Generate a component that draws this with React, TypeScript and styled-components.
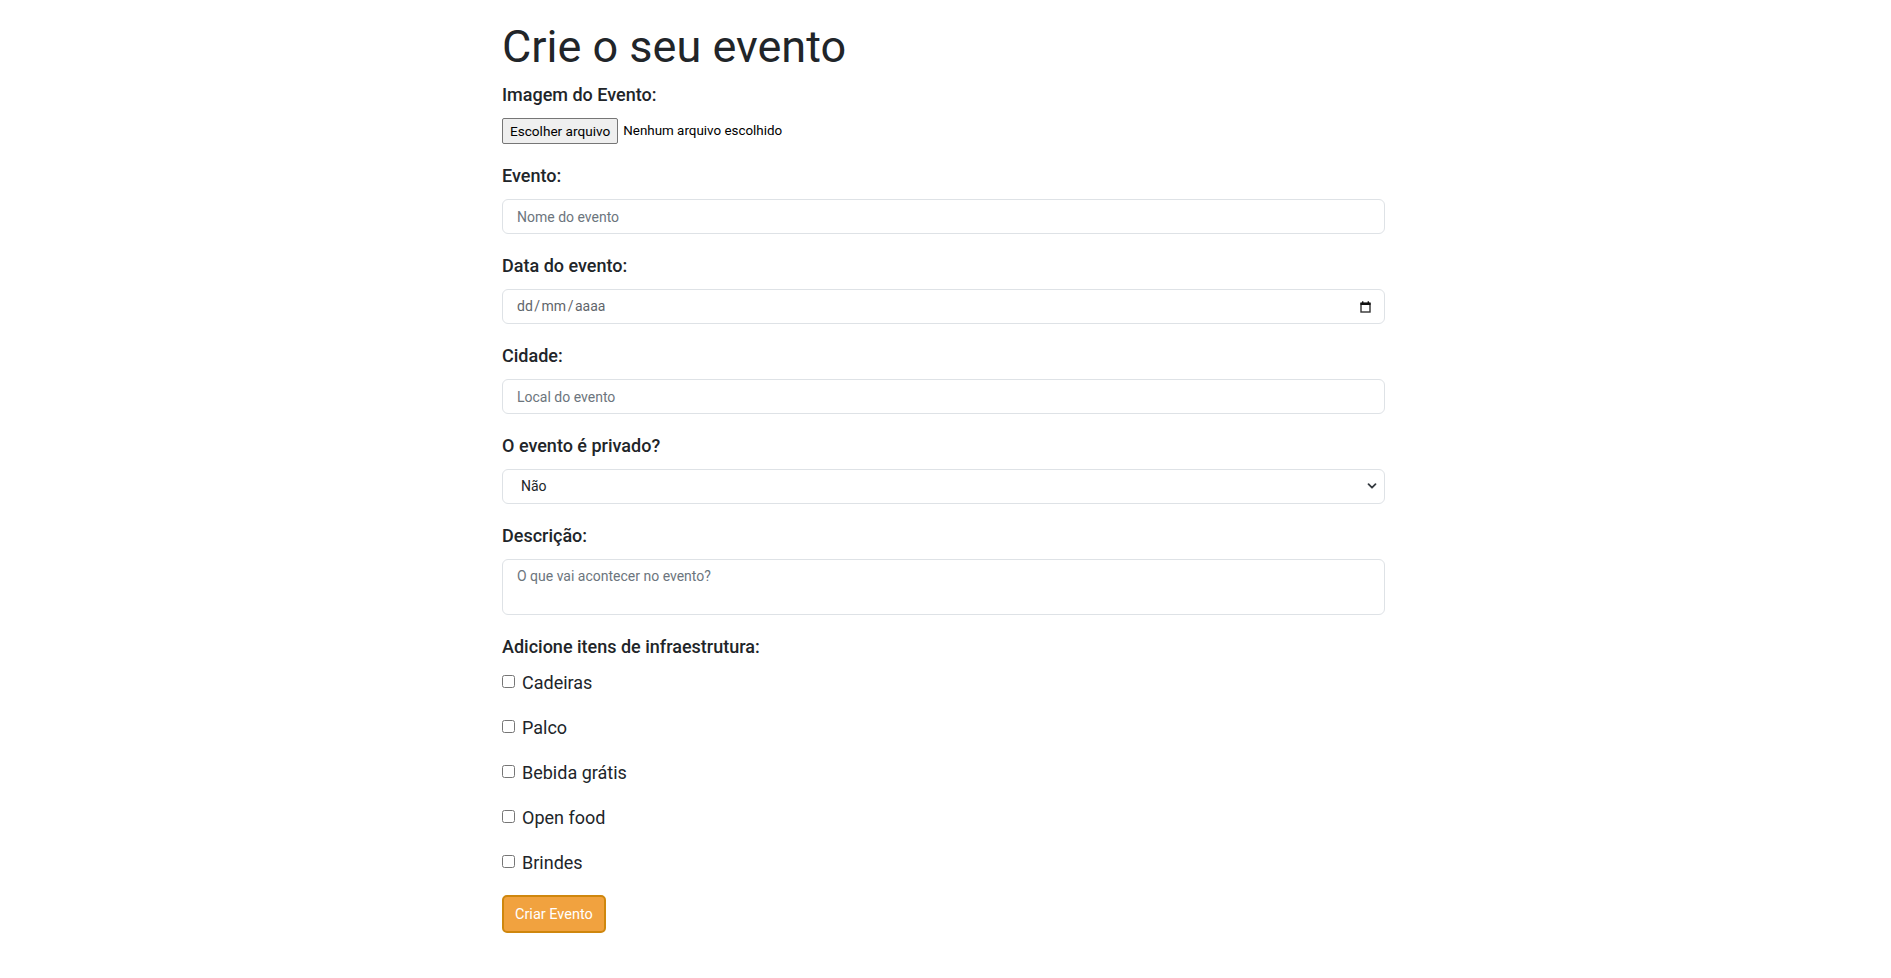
import React from "react";
import styled, { createGlobalStyle } from "styled-components";

const GlobalStyle = createGlobalStyle`
  html, body { margin: 0; padding: 0; background: #ffffff; }
  body {
    font-family: Roboto, "Noto Sans", "Liberation Sans", sans-serif;
    color: #212529;
    font-size: 16px;
    line-height: 1.5;
  }
  * { box-sizing: border-box; }
`;

const Page = styled.div`
  display: flex;
  justify-content: center;
  padding: 20px 4px 40px 0;
`;

const Form = styled.form`
  width: 883px;
  display: flex;
  flex-direction: column;
`;

const Title = styled.h1`
  margin: 0 0 8px;
  font-size: 45px;
  font-weight: 400;
  line-height: 53px;
  color: #212529;
`;

const Group = styled.div<{ $gap?: number }>`
  display: flex;
  flex-direction: column;
  margin-bottom: ${(p) => (p.$gap ?? 18)}px;
`;

const Label = styled.label<{ $mb?: number }>`
  display: block;
  font-size: 18px;
  font-weight: 500;
  line-height: 27px;
  margin-bottom: ${(p) => (p.$mb ?? 10)}px;
  color: #212529;
`;

const FileRow = styled.div`
  display: flex;
  align-items: center;
  gap: 5px;
  height: 26px;
`;

const FileButton = styled.button`
  height: 26px;
  padding: 0 7px;
  font-family: Roboto, "Liberation Sans", sans-serif;
  font-size: 13.6px;
  color: #000;
  background: #efefef;
  border: 1px solid #767676;
  border-radius: 2px;
`;

const FileText = styled.span`
  font-size: 13.4px;
  color: #000;
`;

const fieldBase = `
  width: 100%;
  height: 35px;
  padding: 6px 12px 6px 14px;
  font-family: Roboto, "Liberation Sans", sans-serif;
  font-size: 14px;
  line-height: 21px;
  color: #212529;
  background: #fff;
  border: 1px solid #dee2e6;
  border-radius: 6px;
  outline: none;
`;

const TextInput = styled.input`
  ${fieldBase}
  &::placeholder { color: #6c757d; opacity: 1; }
`;

const DateBox = styled.div`
  ${fieldBase}
  display: flex;
  align-items: center;
  justify-content: space-between;
  color: #5f656b;
  padding-right: 13px;
`;

const DateText = styled.span`
  display: flex;
`;

const Slash = styled.span`
  margin: 0 1.5px;
`;

const SelectWrap = styled.div`
  position: relative;
`;

const Select = styled.select`
  ${fieldBase}
  appearance: none;
  -webkit-appearance: none;
  padding-left: 18px;
  color: #212529;
`;

const Chevron = styled.svg`
  position: absolute;
  right: 8px;
  top: 13px;
  pointer-events: none;
`;

const TextArea = styled.textarea`
  ${fieldBase}
  height: 56px;
  resize: none;
  &::placeholder { color: #6c757d; opacity: 1; }
`;

const CheckRow = styled.label`
  display: flex;
  align-items: center;
  height: 27px;
  font-size: 18px;
  line-height: 27px;
  margin-bottom: 18px;
  color: #212529;
`;

const Check = styled.input`
  width: 13px;
  height: 13px;
  margin: 0 7px 0 0;
  position: relative;
  top: -1px;
`;

const Submit = styled.button`
  align-self: flex-start;
  margin-top: 1px;
  height: 38px;
  padding: 0 11px;
  font-family: Roboto, "Liberation Sans", sans-serif;
  font-size: 14.5px;
  color: #ffffff;
  background: #f1a23f;
  border: 2px solid #cf870e;
  border-radius: 5px;
`;

const items = ["Cadeiras", "Palco", "Bebida grátis", "Open food", "Brindes"];

export default function App() {
  return (
    <>
      <GlobalStyle />
      <Page>
        <Form onSubmit={(e) => e.preventDefault()}>
          <Title>Crie o seu evento</Title>
          <Group>
            <Label $mb={10}>Imagem do Evento:</Label>
            <FileRow>
              <FileButton type="button">Escolher arquivo</FileButton>
              <FileText>Nenhum arquivo escolhido</FileText>
            </FileRow>
          </Group>
          <Group>
            <Label>Evento:</Label>
            <TextInput placeholder="Nome do evento" />
          </Group>
          <Group>
            <Label>Data do evento:</Label>
            <DateBox>
              <DateText>
                dd<Slash>/</Slash>mm<Slash>/</Slash>aaaa
              </DateText>
              <svg width="11" height="12" viewBox="0 0 11 12">
                <rect x="1" y="2.5" width="9" height="8.5" fill="none" stroke="#333" strokeWidth="1.4" />
                <rect x="0.5" y="1.5" width="10" height="2.5" fill="#111" />
                <rect x="2" y="0.3" width="1.4" height="2" fill="#111" />
                <rect x="7.6" y="0.3" width="1.4" height="2" fill="#111" />
              </svg>
            </DateBox>
          </Group>
          <Group>
            <Label>Cidade:</Label>
            <TextInput placeholder="Local do evento" />
          </Group>
          <Group>
            <Label>O evento é privado?</Label>
            <SelectWrap>
              <Select defaultValue="nao">
                <option value="nao">Não</option>
                <option value="sim">Sim</option>
              </Select>
              <Chevron width="10" height="8" viewBox="0 0 10 8">
                <path d="M1.5 2.2 L5 5.7 L8.5 2.2" fill="none" stroke="#343a40" strokeWidth="1.8" strokeLinecap="round" strokeLinejoin="round" />
              </Chevron>
            </SelectWrap>
          </Group>
          <Group $gap={18}>
            <Label>Descrição:</Label>
            <TextArea placeholder="O que vai acontecer no evento?" />
          </Group>
          <Label $mb={9}>Adicione itens de infraestrutura:</Label>
          {items.map((it) => (
            <CheckRow key={it}>
              <Check type="checkbox" />
              {it}
            </CheckRow>
          ))}
          <Submit type="submit">Criar Evento</Submit>
        </Form>
      </Page>
    </>
  );
}
